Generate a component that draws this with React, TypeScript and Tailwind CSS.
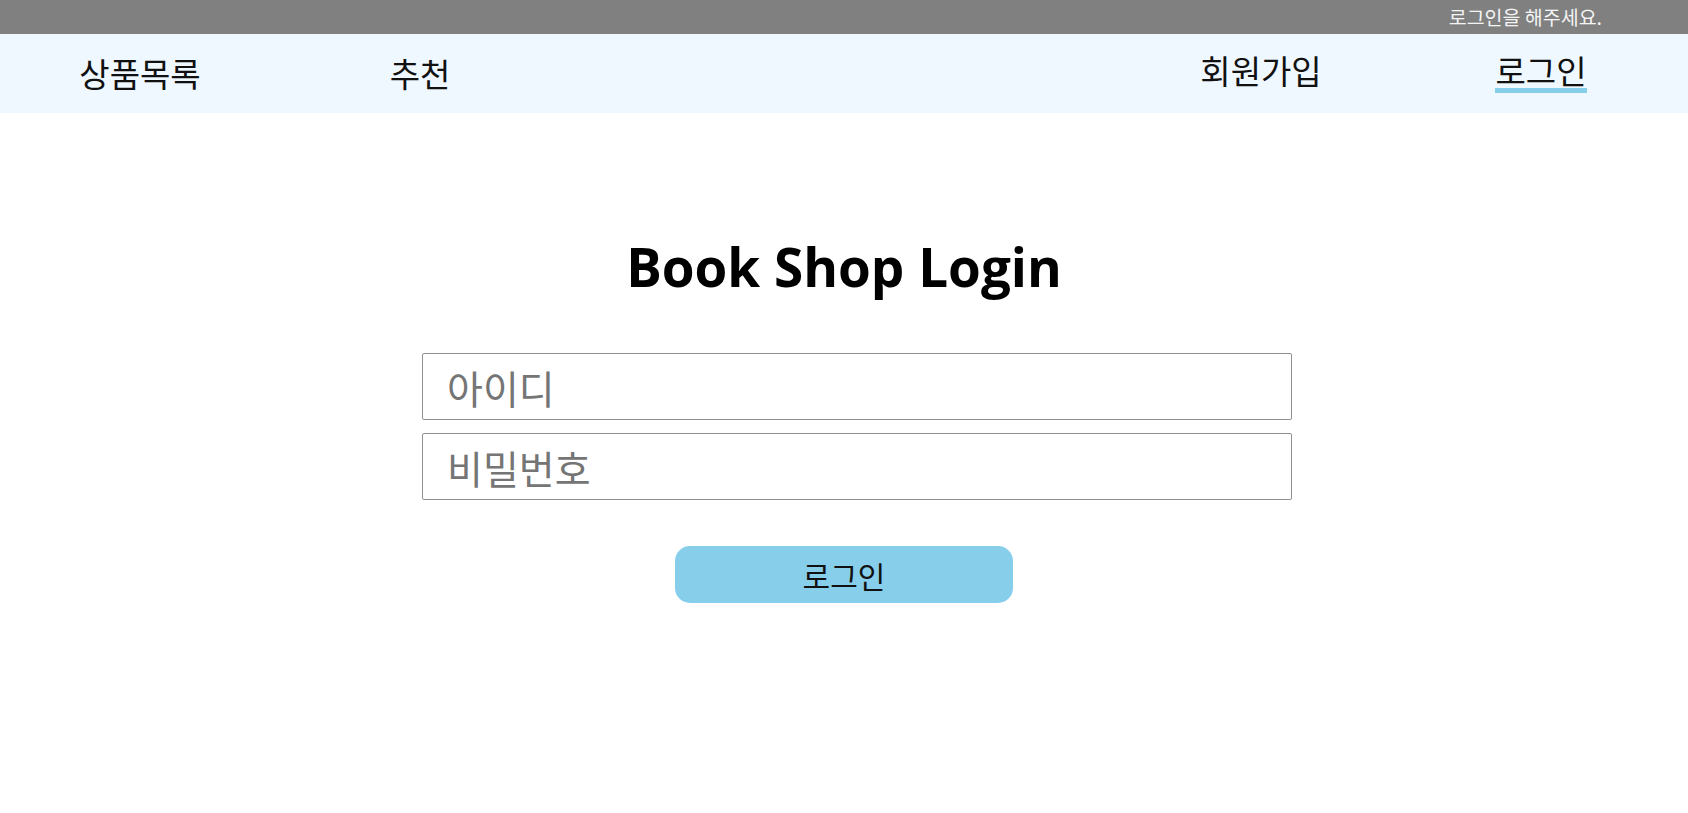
export default function App() {
  return (
    <div className="min-h-screen bg-white font-['Noto_Sans_CJK_KR',sans-serif] text-[#111]">
      <div className="h-[34px] bg-[#808080] flex items-center justify-end pr-[86px] text-[19.5px] text-[#f4f4f4]">
        로그인을 해주세요.
      </div>
      <nav className="h-[79px] bg-[#eff8ff] flex items-center justify-between pr-[7px] text-[33px] leading-none">
        <div className="flex">
          <a className="w-[280px] text-center cursor-pointer">상품목록</a>
          <a className="w-[280px] text-center cursor-pointer">추천</a>
        </div>
        <div className="flex">
          <a className="w-[280px] text-center cursor-pointer">회원가입</a>
          <div className="w-[280px] text-center">
            <a className="inline-block border-b-[5px] border-[#87ceeb] pb-[1px] cursor-pointer">로그인</a>
          </div>
        </div>
      </nav>
      <main className="flex flex-col items-center">
        <h1 className="mt-[127px] text-[53px] leading-none font-bold font-['Open_Sans',sans-serif] text-black">
          Book Shop Login
        </h1>
        <form className="mt-[60px] flex flex-col items-center gap-[13px]" onSubmit={(e) => e.preventDefault()}>
          <input
            type="text"
            placeholder="아이디"
            className="ml-[26px] w-[870px] h-[67px] border border-[#8f8f8f] rounded-[2px] pl-[24px] text-[39px] placeholder:text-[#757575] outline-none"
          />
          <input
            type="password"
            placeholder="비밀번호"
            className="ml-[26px] w-[870px] h-[67px] border border-[#8f8f8f] rounded-[2px] pl-[24px] text-[39px] placeholder:text-[#757575] outline-none"
          />
          <button
            type="submit"
            className="mt-[33px] w-[338px] h-[57px] rounded-[15px] bg-[#87ceeb] text-[30px] text-[#111] leading-none"
          >
            로그인
          </button>
        </form>
      </main>
    </div>
  );
}
